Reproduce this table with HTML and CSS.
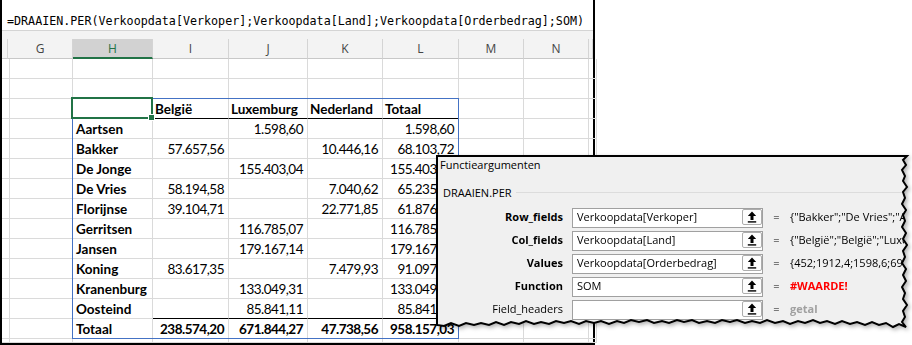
FILE: index.html
```html
<!DOCTYPE html>
<html lang="nl">
<head>
    <meta charset="UTF-8">
    <title>Draaien per - functieargumenten</title>
    <link rel="stylesheet" href="styles.css">
</head>
<body>
    <div class="sheet">
        <div class="formula">=DRAAIEN.PER(Verkoopdata[Verkoper];Verkoopdata[Land];Verkoopdata[Orderbedrag];SOM)</div>
        <div class="bar-gap"></div>
        <div class="grid">
            <!-- column letters -->
            <div class="ch"></div><div class="ch">G</div><div class="ch on">H</div><div class="ch">I</div><div class="ch">J</div><div class="ch">K</div><div class="ch">L</div><div class="ch">M</div><div class="ch">N</div><div class="ch"></div>

            <div class="c"></div><div class="c"></div><div class="c"></div><div class="c"></div><div class="c"></div><div class="c"></div><div class="c"></div><div class="c"></div><div class="c"></div><div class="c"></div>
            <div class="c"></div><div class="c"></div><div class="c"></div><div class="c"></div><div class="c"></div><div class="c"></div><div class="c"></div><div class="c"></div><div class="c"></div><div class="c"></div>

            <!-- pivot header -->
            <div class="c"></div><div class="c"></div><div class="c"></div><div class="c th">België</div><div class="c th">Luxemburg</div><div class="c th">Nederland</div><div class="c th">Totaal</div><div class="c"></div><div class="c"></div><div class="c"></div>

            <div class="c"></div><div class="c"></div><div class="c nm">Aartsen</div><div class="c n"></div><div class="c n">1.598,60</div><div class="c n"></div><div class="c n">1.598,60</div><div class="c"></div><div class="c"></div><div class="c"></div>
            <div class="c"></div><div class="c"></div><div class="c nm">Bakker</div><div class="c n">57.657,56</div><div class="c n"></div><div class="c n">10.446,16</div><div class="c n">68.103,72</div><div class="c"></div><div class="c"></div><div class="c"></div>
            <div class="c"></div><div class="c"></div><div class="c nm">De Jonge</div><div class="c n"></div><div class="c n">155.403,04</div><div class="c n"></div><div class="c n">155.403,04</div><div class="c"></div><div class="c"></div><div class="c"></div>
            <div class="c"></div><div class="c"></div><div class="c nm">De Vries</div><div class="c n">58.194,58</div><div class="c n"></div><div class="c n">7.040,62</div><div class="c n">65.235,20</div><div class="c"></div><div class="c"></div><div class="c"></div>
            <div class="c"></div><div class="c"></div><div class="c nm">Florijnse</div><div class="c n">39.104,71</div><div class="c n"></div><div class="c n">22.771,85</div><div class="c n">61.876,56</div><div class="c"></div><div class="c"></div><div class="c"></div>
            <div class="c"></div><div class="c"></div><div class="c nm">Gerritsen</div><div class="c n"></div><div class="c n">116.785,07</div><div class="c n"></div><div class="c n">116.785,07</div><div class="c"></div><div class="c"></div><div class="c"></div>
            <div class="c"></div><div class="c"></div><div class="c nm">Jansen</div><div class="c n"></div><div class="c n">179.167,14</div><div class="c n"></div><div class="c n">179.167,14</div><div class="c"></div><div class="c"></div><div class="c"></div>
            <div class="c"></div><div class="c"></div><div class="c nm">Koning</div><div class="c n">83.617,35</div><div class="c n"></div><div class="c n">7.479,93</div><div class="c n">91.097,28</div><div class="c"></div><div class="c"></div><div class="c"></div>
            <div class="c"></div><div class="c"></div><div class="c nm">Kranenburg</div><div class="c n"></div><div class="c n">133.049,31</div><div class="c n"></div><div class="c n">133.049,31</div><div class="c"></div><div class="c"></div><div class="c"></div>
            <div class="c"></div><div class="c"></div><div class="c nm">Oosteind</div><div class="c n end"></div><div class="c n end">85.841,11</div><div class="c n end"></div><div class="c n end">85.841,11</div><div class="c"></div><div class="c"></div><div class="c"></div>

            <!-- totals -->
            <div class="c"></div><div class="c"></div><div class="c nm">Totaal</div><div class="c n b">238.574,20</div><div class="c n b">671.844,27</div><div class="c n b">47.738,56</div><div class="c n b">958.157,03</div><div class="c"></div><div class="c"></div><div class="c"></div>

            <div class="c"></div><div class="c"></div><div class="c"></div><div class="c"></div><div class="c"></div><div class="c"></div><div class="c"></div><div class="c"></div><div class="c"></div><div class="c"></div>

            <!-- selection layer drawn over the cells -->
            <div class="marks">
                <div class="spill"></div>
                <div class="active"></div>
            </div>
        </div>
    </div>

    <div class="dialog">
        <div class="dlg-body">
            <div class="dlg-title">Functieargumenten</div>
            <div class="dlg-group">DRAAIEN.PER</div>
            <div class="args">
                <div class="arg-label">Row_fields</div>
                <div class="arg-box"><span>Verkoopdata[Verkoper]</span><i class="pick"><svg width="10" height="12" viewBox="0 0 10 12"><path d="M5 0.5 L0.8 5 H3.5 V9 H6.5 V5 H9.2 Z"/><rect x="0.8" y="10.2" width="8.4" height="1.4"/></svg></i></div>
                <div class="eq">=</div>
                <div class="arg-val">{"Bakker";"De Vries";"Aartsen";"Bakker";"Florijnse";"Jansen"}</div>

                <div class="arg-label">Col_fields</div>
                <div class="arg-box"><span>Verkoopdata[Land]</span><i class="pick"><svg width="10" height="12" viewBox="0 0 10 12"><path d="M5 0.5 L0.8 5 H3.5 V9 H6.5 V5 H9.2 Z"/><rect x="0.8" y="10.2" width="8.4" height="1.4"/></svg></i></div>
                <div class="eq">=</div>
                <div class="arg-val">{"België";"België";"Luxemburg";"Nederland";"België"}</div>

                <div class="arg-label">Values</div>
                <div class="arg-box"><span>Verkoopdata[Orderbedrag]</span><i class="pick"><svg width="10" height="12" viewBox="0 0 10 12"><path d="M5 0.5 L0.8 5 H3.5 V9 H6.5 V5 H9.2 Z"/><rect x="0.8" y="10.2" width="8.4" height="1.4"/></svg></i></div>
                <div class="eq">=</div>
                <div class="arg-val">{452;1912,4;1598,6;699;1345,2;2250,8}</div>

                <div class="arg-label">Function</div>
                <div class="arg-box"><span>SOM</span><i class="pick"><svg width="10" height="12" viewBox="0 0 10 12"><path d="M5 0.5 L0.8 5 H3.5 V9 H6.5 V5 H9.2 Z"/><rect x="0.8" y="10.2" width="8.4" height="1.4"/></svg></i></div>
                <div class="eq">=</div>
                <div class="arg-val err">#WAARDE!</div>

                <div class="arg-label opt">Field_headers</div>
                <div class="arg-box"><span></span><i class="pick"><svg width="10" height="12" viewBox="0 0 10 12"><path d="M5 0.5 L0.8 5 H3.5 V9 H6.5 V5 H9.2 Z"/><rect x="0.8" y="10.2" width="8.4" height="1.4"/></svg></i></div>
                <div class="eq">=</div>
                <div class="arg-val hint">getal</div>
            </div>
        </div>
        <!-- torn edge outline -->
        <svg class="dlg-edge" width="476" height="178" viewBox="0 0 476 178">
            <polygon fill="none" stroke="#000" stroke-width="2" points="1,1 471,1 467,5 470,10 466,15 469,21 467,26 471,32 467,37 469,43 466,49 470,55 467,60 469,66 466,72 470,78 467,84 471,90 467,96 469,102 466,108 470,114 467,120 470,126 466,132 469,138 467,144 471,150 467,156 469,162 466,167 470,172 463,169 457,172 450,168 443,170 436,167 429,170 421,167 414,169 406,166 399,169 391,166 384,168 377,165 369,168 362,166 354,169 347,166 339,168 331,165 324,168 316,166 309,168 301,165 294,167 286,165 279,168 271,166 263,168 256,165 248,167 241,165 233,168 226,166 218,168 211,165 203,167 195,165 188,168 181,166 173,169 165,166 158,168 150,166 143,169 135,166 128,168 120,166 113,169 105,167 98,169 90,166 83,169 75,167 68,170 60,167 53,170 45,168 38,170 30,168 23,171 15,168 8,171 1,170"/>
        </svg>
    </div>
</body>
</html>
```

FILE: styles.css
```css
:root {
    --grid-line: #dadada;
    --excel-green: #217346;
    --spill-blue: #4472c4;
    --dialog-bg: #f0f0f0;
}
body {
    margin: 0;
    width: 912px;
    height: 345px;
    overflow: hidden;
    position: relative;
    background: #ffffff;
}

/* worksheet screenshot */
.sheet {
    width: 595px;
    height: 345px;
    box-sizing: border-box;
    border: 2px solid #000000;
    border-top: 0;
    display: flex;
    flex-direction: column;
    background: #ffffff;
}
.formula {
    height: 31px;
    box-sizing: border-box;
    padding: 13px 0 0 5px;
    border-bottom: 1px solid #d4d4d4;
    font-family: "DejaVu Sans Mono", monospace;
    font-size: 11.7px;
    line-height: 16px;
    white-space: nowrap;
    color: #000000;
}
.bar-gap {
    height: 8px;
    background: #f3f3f3;
}
.grid,
.marks {
    display: grid;
    grid-template-columns: 6px 65px 80px 76px 79px 75px 76px 65px 65px 4px;
    grid-template-rows: repeat(15, 20px) 4px;
}
.grid {
    position: relative;
    font-family: Lato, sans-serif;
    font-size: 13.5px;
    color: #000000;
}
.ch {
    box-sizing: border-box;
    background: #f3f3f3;
    border-right: 1px solid #d4d4d4;
    border-bottom: 1px solid #c8c8c8;
    font-family: "Open Sans", sans-serif;
    font-size: 12px;
    line-height: 19px;
    text-align: center;
    color: #444444;
}
.ch.on {
    background: #d2d2d2;
    border-bottom: 2px solid var(--excel-green);
    color: var(--excel-green);
}
.c {
    box-sizing: border-box;
    border-right: 1px solid var(--grid-line);
    border-bottom: 1px solid var(--grid-line);
    padding: 1px 4px 0 3px;
    line-height: 18px;
    white-space: nowrap;
    overflow: hidden;
}
.c.th {
    font-weight: bold;
    padding-left: 2px;
    border-bottom-color: #000000;
}
.c.nm {
    font-weight: bold;
}
.c.n {
    text-align: right;
    letter-spacing: -0.5px;
}
.c.b {
    font-weight: bold;
}
.c.end {
    border-bottom-color: #000000;
}

/* spill range outline and the active cell */
.marks {
    position: absolute;
    inset: 0;
    pointer-events: none;
}
.spill {
    grid-column: 3 / 8;
    grid-row: 4 / 16;
    margin: -1px 0 0 -1px;
    border: 1px solid var(--spill-blue);
}
.active {
    grid-column: 3;
    grid-row: 4;
    margin: -2px 0 0 -2px;
    border: 2px solid var(--excel-green);
    position: relative;
}
.active::after {
    content: "";
    position: absolute;
    right: -4px;
    bottom: -4px;
    width: 5px;
    height: 5px;
    background: var(--excel-green);
    border: 1px solid #ffffff;
}

/* function arguments dialog with torn edges */
.dialog {
    position: absolute;
    left: 436px;
    top: 155px;
    width: 476px;
    height: 178px;
    filter: drop-shadow(2px 2px 2px rgba(0, 0, 0, 0.3));
}
.dlg-edge {
    position: absolute;
    left: 0;
    top: 0;
}
.dlg-body {
    position: absolute;
    inset: 0;
    background: var(--dialog-bg);
    font-family: "Open Sans", sans-serif;
    font-size: 11px;
    color: #000000;
    clip-path: polygon(1px 1px, 471px 1px, 467px 5px, 470px 10px, 466px 15px, 469px 21px, 467px 26px, 471px 32px, 467px 37px, 469px 43px, 466px 49px, 470px 55px, 467px 60px, 469px 66px, 466px 72px, 470px 78px, 467px 84px, 471px 90px, 467px 96px, 469px 102px, 466px 108px, 470px 114px, 467px 120px, 470px 126px, 466px 132px, 469px 138px, 467px 144px, 471px 150px, 467px 156px, 469px 162px, 466px 167px, 470px 172px, 463px 169px, 457px 172px, 450px 168px, 443px 170px, 436px 167px, 429px 170px, 421px 167px, 414px 169px, 406px 166px, 399px 169px, 391px 166px, 384px 168px, 377px 165px, 369px 168px, 362px 166px, 354px 169px, 347px 166px, 339px 168px, 331px 165px, 324px 168px, 316px 166px, 309px 168px, 301px 165px, 294px 167px, 286px 165px, 279px 168px, 271px 166px, 263px 168px, 256px 165px, 248px 167px, 241px 165px, 233px 168px, 226px 166px, 218px 168px, 211px 165px, 203px 167px, 195px 165px, 188px 168px, 181px 166px, 173px 169px, 165px 166px, 158px 168px, 150px 166px, 143px 169px, 135px 166px, 128px 168px, 120px 166px, 113px 169px, 105px 167px, 98px 169px, 90px 166px, 83px 169px, 75px 167px, 68px 170px, 60px 167px, 53px 170px, 45px 168px, 38px 170px, 30px 168px, 23px 171px, 15px 168px, 8px 171px, 1px 170px);
}
.dlg-title {
    height: 30px;
    box-sizing: border-box;
    padding: 2px 0 0 4px;
    line-height: 15px;
}
.dlg-group {
    display: flex;
    align-items: center;
    gap: 4px;
    padding-left: 7px;
    line-height: 15px;
}
.dlg-group::after {
    content: "";
    flex: 1;
    height: 1px;
    background: #dcdcdc;
}
.args {
    display: grid;
    grid-template-columns: 136px 191px 27px 114px;
    grid-auto-rows: 20px;
    row-gap: 3px;
    margin-top: 8px;
    line-height: 17px;
}
.arg-label {
    text-align: right;
    padding-right: 9px;
    font-weight: bold;
}
.arg-label.opt {
    font-weight: normal;
}
.arg-box {
    display: flex;
    box-sizing: border-box;
    background: #ffffff;
    border: 1px solid #a0a0a0;
}
.arg-box span {
    flex: 1;
    padding-left: 4px;
    line-height: 16px;
    white-space: nowrap;
    overflow: hidden;
}
.pick {
    width: 20px;
    height: 16px;
    box-sizing: border-box;
    border: 1px solid #adadad;
    border-radius: 2px;
    background: #fdfdfd;
    display: flex;
    align-items: center;
    justify-content: center;
}
.pick svg {
    fill: #000000;
}
.eq {
    text-align: center;
}
.arg-val {
    white-space: nowrap;
    overflow: hidden;
}
.arg-val.err {
    color: #ff0000;
    font-weight: bold;
}
.arg-val.hint {
    color: #a0a0a0;
    font-weight: bold;
}
```
